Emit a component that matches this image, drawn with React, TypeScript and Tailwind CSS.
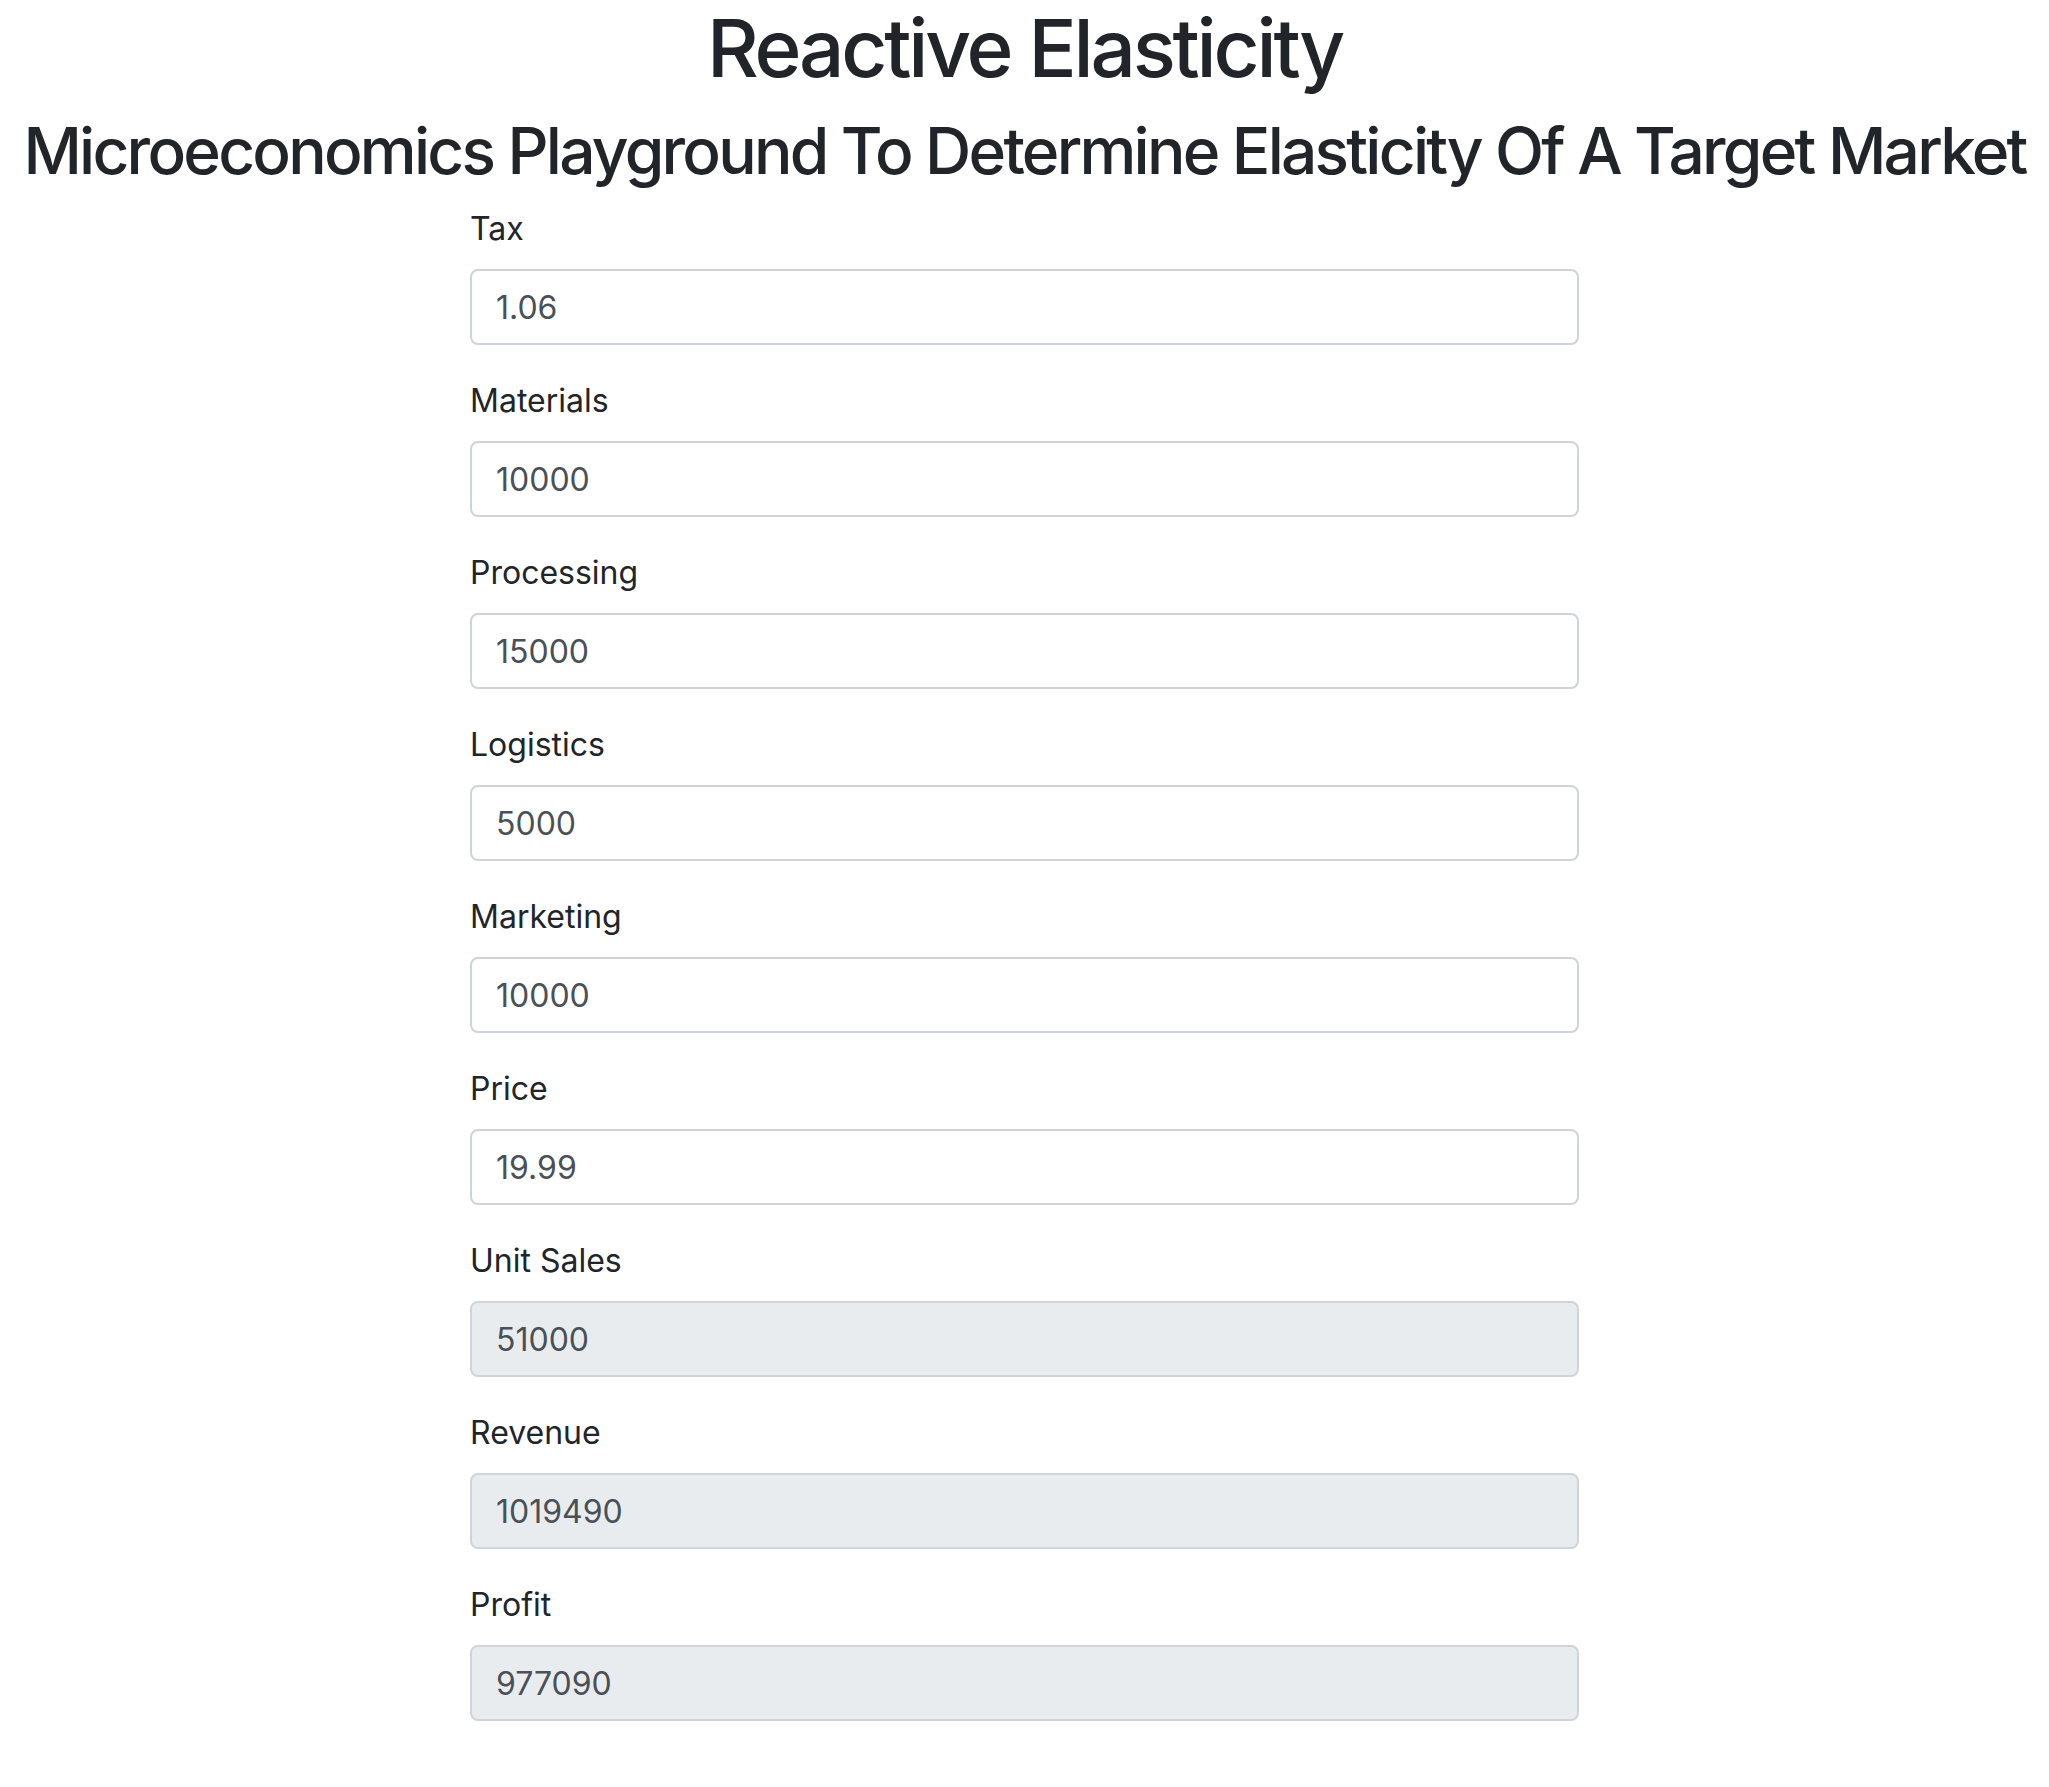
type Field = {
  label: string;
  value: string;
  readOnly?: boolean;
};

const fields: Field[] = [
  { label: "Tax", value: "1.06" },
  { label: "Materials", value: "10000" },
  { label: "Processing", value: "15000" },
  { label: "Logistics", value: "5000" },
  { label: "Marketing", value: "10000" },
  { label: "Price", value: "19.99" },
  { label: "Unit Sales", value: "51000", readOnly: true },
  { label: "Revenue", value: "1019490", readOnly: true },
  { label: "Profit", value: "977090", readOnly: true },
];

function FormField({ label, value, readOnly }: Field) {
  return (
    <div className="mb-[32px]">
      <label className="block mb-[16px] text-[32px] leading-[48px] text-[#212529]">
        {label}
      </label>
      <input
        type="text"
        defaultValue={value}
        readOnly={readOnly}
        className={
          readOnly
            ? "block w-full h-[76px] px-[24px] text-[32px] leading-[48px] text-[#495057] bg-[#e9ecef] border-2 border-[#ced4da] rounded-[8px] outline-none"
            : "block w-full h-[76px] px-[24px] text-[32px] leading-[48px] text-[#495057] bg-white border-2 border-[#ced4da] rounded-[8px] outline-none"
        }
      />
    </div>
  );
}

export default function App() {
  return (
    <div className="min-h-[1787px] bg-white font-['Inter',sans-serif] text-[#212529]">
      <h1 className="text-center text-[80px] leading-[96px] font-medium mb-[16px] tracking-[-0.04em]">
        Reactive Elasticity
      </h1>
      <h2 className="text-center text-[64px] leading-[77px] font-medium mb-[16px] tracking-[-0.043em] whitespace-nowrap">
        Microeconomics Playground To Determine Elasticity Of A Target Market
      </h2>
      <form className="mx-auto w-[1109px]">
        {fields.map((f) => (
          <FormField key={f.label} {...f} />
        ))}
      </form>
    </div>
  );
}
